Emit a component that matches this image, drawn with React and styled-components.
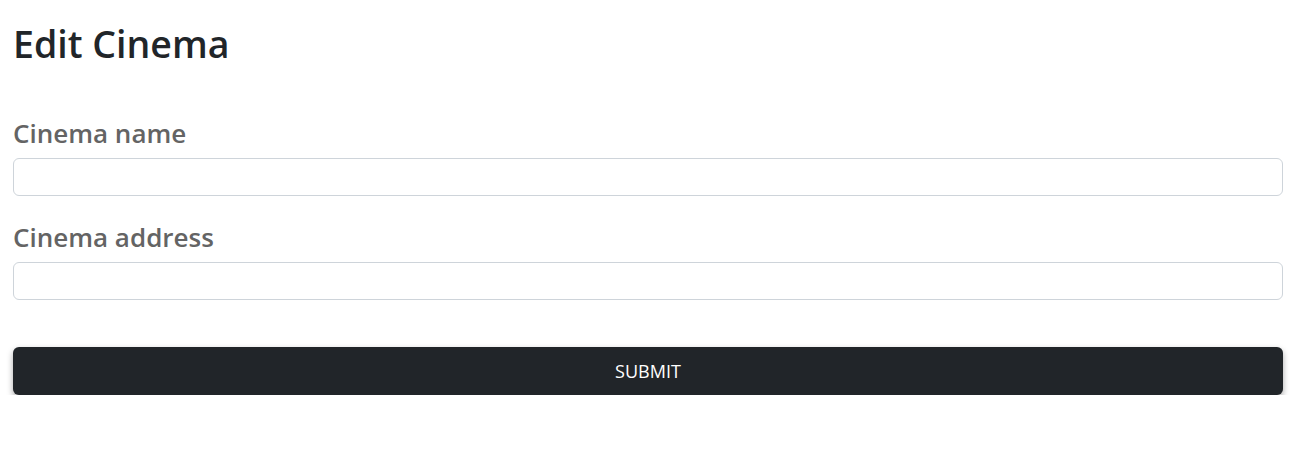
import React from "react";
import styled, { createGlobalStyle } from "styled-components";

const GlobalStyle = createGlobalStyle`
  body {
    margin: 0;
    background: #fff;
    font-family: "Open Sans", "Noto Sans", sans-serif;
    color: #212529;
  }
  * { box-sizing: border-box; }
`;

const Page = styled.div`
  width: 1283px;
  padding: 20px 0 0 13px;
`;

const Title = styled.h1`
  margin: 0 0 50px;
  font-size: 37.5px;
  font-weight: 600;
  line-height: 48px;
  color: #212529;
`;

const Form = styled.form`
  display: flex;
  flex-direction: column;
`;

const Field = styled.div`
  display: flex;
  flex-direction: column;
  gap: 9px;
  margin-bottom: ${(p) => p.$gap}px;
`;

const Label = styled.label`
  font-size: 26px;
  font-weight: 600;
  line-height: 31px;
  color: #646464;
`;

const Input = styled.input`
  height: 38px;
  padding: 6px 12px;
  font: inherit;
  font-size: 16px;
  border: 1px solid #ced4da;
  border-radius: 6px;
  background: #fff;
  outline: none;
`;

const Button = styled.button`
  height: 48px;
  border: 0;
  border-radius: 6px;
  background: #212529;
  color: #fff;
  font-family: inherit;
  font-size: 18px;
  text-transform: uppercase;
  box-shadow: 0 3px 6px rgba(0, 0, 0, 0.35);
  cursor: pointer;
`;

export default function App() {
  return (
    <Page>
      <GlobalStyle />
      <Title>Edit Cinema</Title>
      <Form onSubmit={(e) => e.preventDefault()}>
        <Field $gap={26}>
          <Label htmlFor="name">Cinema name</Label>
          <Input id="name" type="text" />
        </Field>
        <Field $gap={47}>
          <Label htmlFor="address">Cinema address</Label>
          <Input id="address" type="text" />
        </Field>
        <Button type="submit">Submit</Button>
      </Form>
    </Page>
  );
}
